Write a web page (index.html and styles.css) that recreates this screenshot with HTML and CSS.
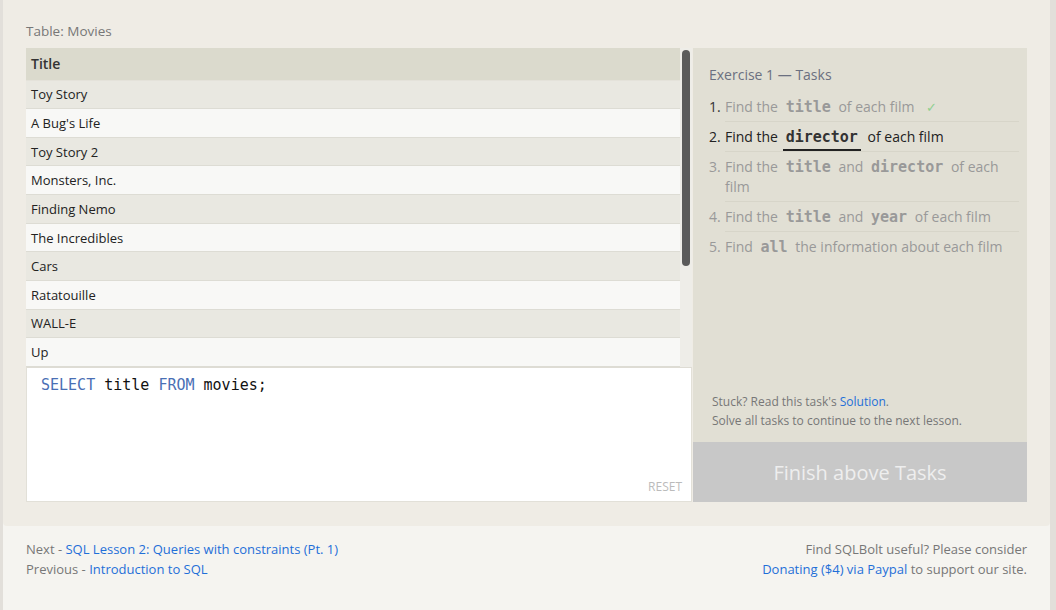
FILE: index.html
```html
<!DOCTYPE html>
<html>
<head>
<meta charset="utf-8">
<link rel="stylesheet" href="styles.css">
</head>
<body>
<div class="page">
  <section class="lesson">
    <div class="table-label">Table: Movies</div>
    <div class="exercise">
      <div class="left">
        <div class="results">
          <table class="grid">
            <thead><tr><th>Title</th></tr></thead>
            <tbody>
              <tr><td>Toy Story</td></tr>
              <tr><td>A Bug's Life</td></tr>
              <tr><td>Toy Story 2</td></tr>
              <tr><td>Monsters, Inc.</td></tr>
              <tr><td>Finding Nemo</td></tr>
              <tr><td>The Incredibles</td></tr>
              <tr><td>Cars</td></tr>
              <tr><td>Ratatouille</td></tr>
              <tr><td>WALL-E</td></tr>
              <tr><td>Up</td></tr>
            </tbody>
          </table>
          <div class="track"><div class="thumb"></div></div>
        </div>
        <div class="editor">
          <div class="code"><span class="kw">SELECT</span> title <span class="kw">FROM</span> movies;</div>
          <div class="reset">RESET</div>
        </div>
      </div>
      <div class="right">
        <div class="tasks">
          <div class="tasks-title">Exercise 1 — Tasks</div>
          <ol class="task-list">
            <li class="done"><span class="n">1.</span><span class="t">Find the <code>title</code> of each film <span class="check">✓</span></span></li>
            <li class="active"><span class="n">2.</span><span class="t">Find the <code class="u">director</code> of each film</span></li>
            <li><span class="n">3.</span><span class="t">Find the <code>title</code> and <code>director</code> of each film</span></li>
            <li><span class="n">4.</span><span class="t">Find the <code>title</code> and <code>year</code> of each film</span></li>
            <li class="last"><span class="n">5.</span><span class="t">Find <code>all</code> the information about each film</span></li>
          </ol>
        </div>
        <div class="hint">
          <div>Stuck? Read this task's <a href="#">Solution</a>.</div>
          <div>Solve all tasks to continue to the next lesson.</div>
        </div>
        <div class="finish">Finish above Tasks</div>
      </div>
    </div>
  </section>
  <footer class="footer">
    <div class="nav">
      <div>Next - <a href="#">SQL Lesson 2: Queries with constraints (Pt. 1)</a></div>
      <div>Previous - <a href="#">Introduction to SQL</a></div>
    </div>
    <div class="donate">
      <div>Find SQLBolt useful? Please consider</div>
      <div><a href="#">Donating ($4) via Paypal</a> to support our site.</div>
    </div>
  </footer>
</div>
</body>
</html>
```

FILE: styles.css
```css
* { box-sizing: border-box; }
html, body { margin: 0; padding: 0; }
body {
  background: #e2dfda;
  font-family: "Open Sans", "Noto Sans", sans-serif;
  width: 1056px;
  height: 610px;
  overflow: hidden;
}
.page {
  margin-left: 3px;
  width: 1047px;
  height: 610px;
  background: #f5f4f0;
}
.lesson {
  background: #efece5;
  padding: 21px 23px 24px 23px;
  border-radius: 0 0 4px 4px;
}
.table-label {
  font-size: 13.5px;
  color: #777;
  line-height: 20px;
  margin-bottom: 7px;
}
.exercise {
  display: flex;
  height: 454px;
}
.left {
  width: 666px;
  display: flex;
  flex-direction: column;
}
.results {
  display: flex;
  height: 319px;
  overflow: hidden;
}
.grid {
  width: 654px;
  border-collapse: collapse;
  font-size: 13px;
  color: #222;
}
.grid th {
  background: #dbdacd;
  text-align: left;
  font-weight: 600;
  font-size: 14px;
  height: 32px;
  padding: 0 5px;
  color: #333;
  border-bottom: 1px solid #e4e2da;
}
.grid td {
  height: 28px;
  padding: 0 5px;
  border-bottom: 1px solid #dddcd4;
}
.grid tbody tr:nth-child(odd) td { background: #e9e8e1; }
.grid tbody tr:nth-child(even) td { background: #f8f8f6; }
.track {
  width: 12px;
  background: #eeede8;
  padding: 2px;
}
.thumb {
  width: 8px;
  height: 216px;
  background: #5b5b5b;
  border-radius: 4px;
}
.editor {
  flex: 1;
  background: #fff;
  border: 1px solid #e2e0d8;
  border-top: 1px solid #dedcd4;
  display: flex;
  flex-direction: column;
  justify-content: space-between;
  padding: 6px 9px 6px 14px;
}
.code {
  font-family: "DejaVu Sans Mono", monospace;
  font-size: 15px;
  line-height: 22px;
  color: #111;
}
.kw { color: #4a6fb5; }
.reset {
  align-self: flex-end;
  font-size: 12px;
  color: #bbb;
}
.right {
  width: 334px;
  margin-left: 1px;
  background: #e1dfd4;
  display: flex;
  flex-direction: column;
}
.tasks {
  flex: 1;
  padding: 17px 8px 0 16px;
}
.tasks-title {
  font-size: 14px;
  color: #6b7080;
  line-height: 20px;
  margin-bottom: 7px;
}
.task-list {
  list-style: none;
  margin: 0;
  padding: 0;
  font-size: 14px;
  color: #999;
}
.task-list li {
  display: flex;
  line-height: 20px;
}
.task-list .n {
  width: 16px;
  flex: none;
  padding-top: 5px;
}
.task-list .t {
  flex: 1;
  padding: 5px 0 4px;
  border-bottom: 1px solid #d7d5c9;
}
.task-list .last .t { border-bottom: none; }
.task-list .done .n { color: #333; }
.task-list .active { color: #222; }
code {
  font-family: "DejaVu Sans Mono", monospace;
  font-weight: bold;
  font-size: 15px;
  line-height: 18px;
  margin: 0 4px;
  color: #999;
}
.active code { color: #333; }
code.u {
  border-bottom: 2px solid #222;
  padding: 0 3px 3px;
  margin: 0 3px 0 1px;
}
.check { color: #8fcf8f; font-size: 13px; margin-left: 8px; }
.hint {
  padding: 0 16px 12px 19px;
  font-size: 12px;
  color: #777;
  line-height: 19px;
}
a { color: #1f6fd8; text-decoration: none; }
.finish {
  height: 60px;
  background: #c8c8c8;
  color: #eee;
  font-size: 20px;
  display: flex;
  align-items: center;
  justify-content: center;
}
.footer {
  display: flex;
  justify-content: space-between;
  padding: 13px 23px 0 23px;
  font-size: 13px;
  line-height: 20px;
  color: #777;
}
.donate { text-align: right; }
```
